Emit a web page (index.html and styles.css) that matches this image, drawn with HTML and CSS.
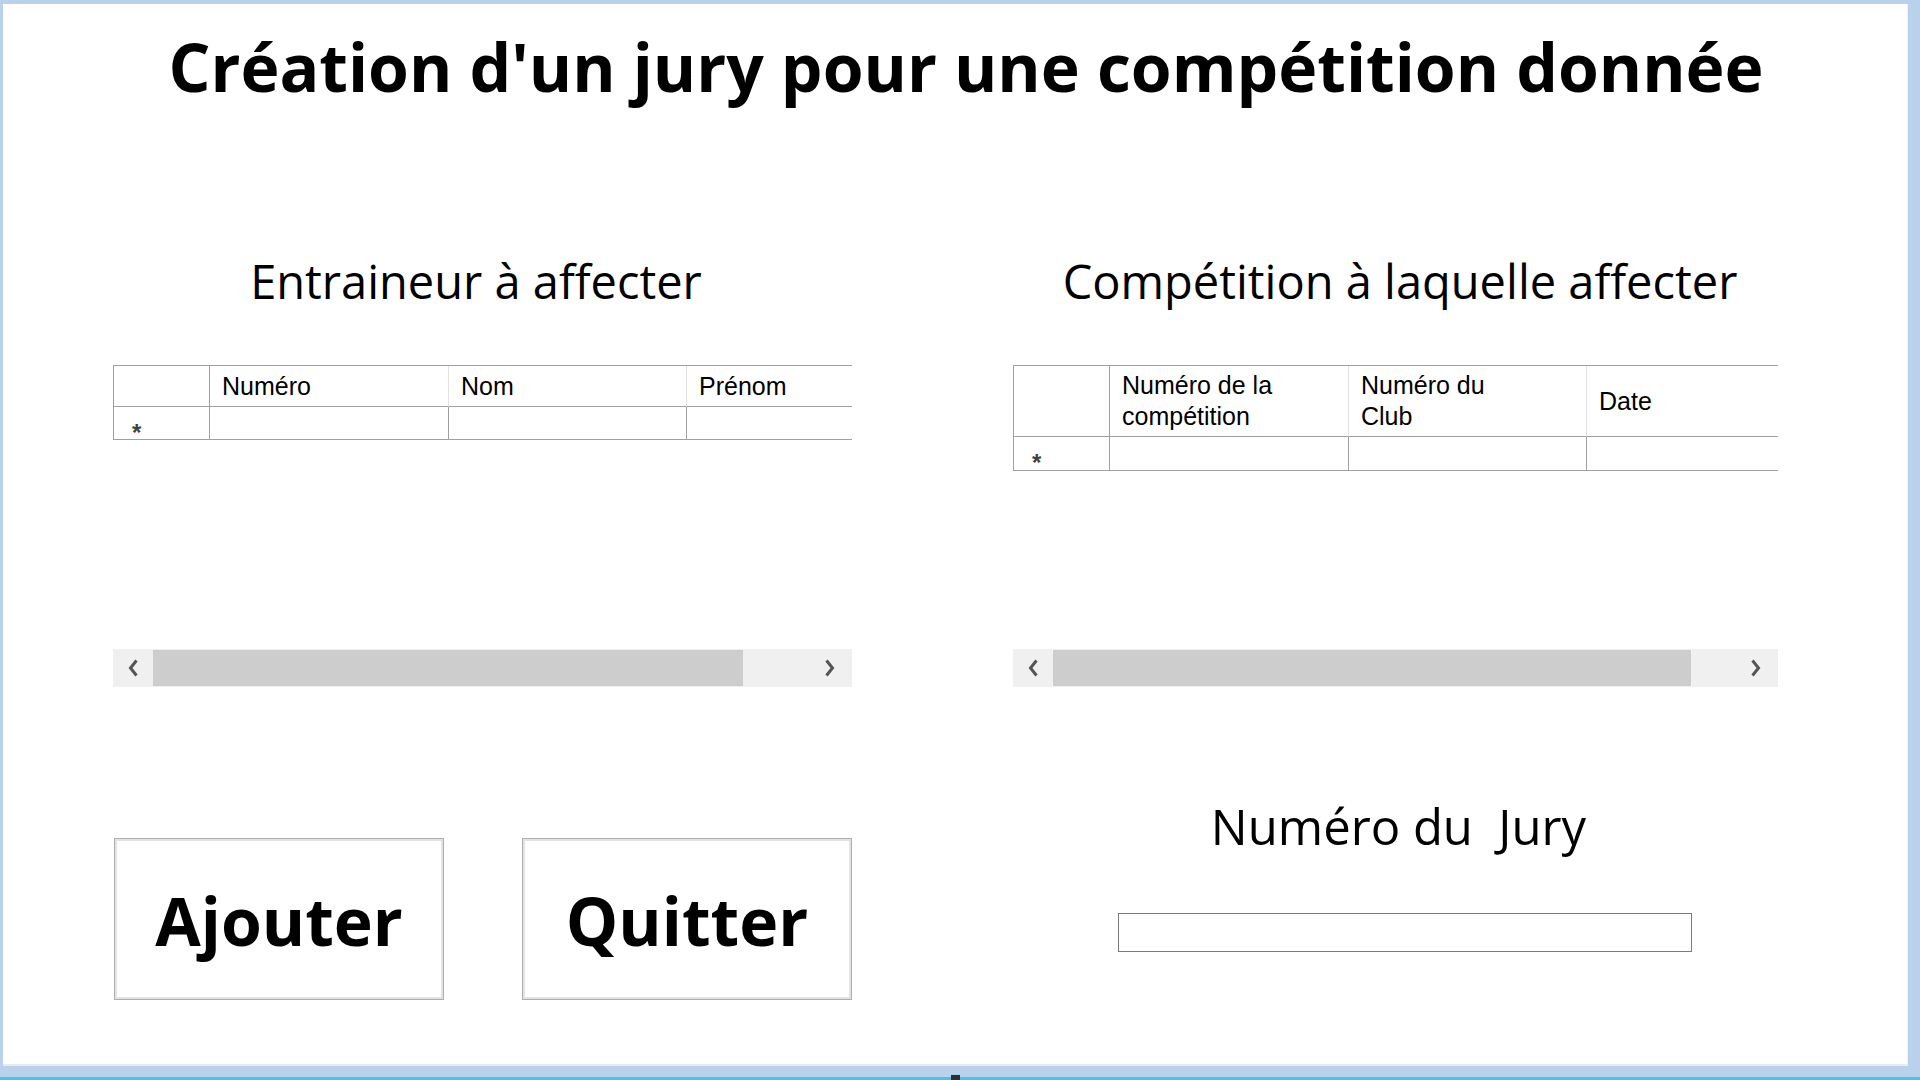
FILE: index.html
```html
<!DOCTYPE html>
<html lang="fr">
<head>
<meta charset="utf-8">
<title>Création d'un jury</title>
<link rel="stylesheet" href="styles.css">
</head>
<body>
<div class="window">
  <h1 class="title">Création d'un jury pour une compétition donnée</h1>
  <div class="columns">
    <section class="col col-left">
      <h2 class="heading heading-left">Entraineur à affecter</h2>
      <div class="dgv">
        <div class="dgv-table">
          <div class="dgv-row dgv-head dgv-head-1">
            <div class="cell rowhead"></div>
            <div class="cell hcell w239">Numéro</div>
            <div class="cell hcell w238">Nom</div>
            <div class="cell hcell w239">Prénom</div>
          </div>
          <div class="dgv-row dgv-data">
            <div class="cell rowhead star">*</div>
            <div class="cell w239"></div>
            <div class="cell w238"></div>
            <div class="cell w239"></div>
          </div>
        </div>
        <div class="hscroll">
          <div class="arrow arrow-l"><svg width="10" height="18" viewBox="0 0 10 18"><path d="M8.5 1.5 L2.5 9 L8.5 16.5" fill="none" stroke="#555" stroke-width="3"/></svg></div>
          <div class="thumb thumb-left"></div>
          <div class="track-rest"></div>
          <div class="arrow arrow-r"><svg width="10" height="18" viewBox="0 0 10 18"><path d="M1.5 1.5 L7.5 9 L1.5 16.5" fill="none" stroke="#555" stroke-width="3"/></svg></div>
        </div>
      </div>
      <div class="buttons">
        <button class="btn">Ajouter</button>
        <button class="btn">Quitter</button>
      </div>
    </section>
    <section class="col col-right">
      <h2 class="heading heading-right">Compétition à laquelle affecter</h2>
      <div class="dgv">
        <div class="dgv-table">
          <div class="dgv-row dgv-head dgv-head-2">
            <div class="cell rowhead"></div>
            <div class="cell hcell w239">Numéro de la<br>compétition</div>
            <div class="cell hcell w238">Numéro du<br>Club</div>
            <div class="cell hcell w239">Date</div>
          </div>
          <div class="dgv-row dgv-data dgv-data-2">
            <div class="cell rowhead star">*</div>
            <div class="cell w239"></div>
            <div class="cell w238"></div>
            <div class="cell w239"></div>
          </div>
        </div>
        <div class="hscroll">
          <div class="arrow arrow-l"><svg width="10" height="18" viewBox="0 0 10 18"><path d="M8.5 1.5 L2.5 9 L8.5 16.5" fill="none" stroke="#555" stroke-width="3"/></svg></div>
          <div class="thumb thumb-right"></div>
          <div class="track-rest"></div>
          <div class="arrow arrow-r"><svg width="10" height="18" viewBox="0 0 10 18"><path d="M1.5 1.5 L7.5 9 L1.5 16.5" fill="none" stroke="#555" stroke-width="3"/></svg></div>
        </div>
      </div>
      <div class="jury-label">Numéro du&nbsp; Jury</div>
      <input class="jury-input" type="text">
    </section>
  </div>
</div>
<div class="taskbar"><span class="tb-icon"></span></div>
</body>
</html>
```
FILE: styles.css
```css
html, body {
  margin: 0;
  padding: 0;
}
body {
  width: 1920px;
  height: 1080px;
  overflow: hidden;
  background: #b9d1ea;
  font-family: "Open Sans", "Noto Sans", sans-serif;
  color: #000;
}
.window {
  margin: 4px 0 0 3px;
  width: 1904px;
  height: 1060px;
  background: #fff;
  border-right: 1px solid #eef2f7;
  border-bottom: 2px solid #e6ebf2;
  box-sizing: content-box;
}
.title {
  margin: 0;
  padding: 29px 0 0 22px;
  font-size: 66px;
  line-height: 66px;
  font-weight: 700;
  text-align: center;
  white-space: nowrap;
}
.columns {
  display: grid;
  grid-template-columns: 739px 765px;
  column-gap: 161px;
  padding-left: 110px;
}
.col {
  display: flex;
  flex-direction: column;
}
.heading {
  margin: 159px 0 0 0;
  font-size: 47px;
  line-height: 47px;
  font-weight: 400;
  text-align: center;
  white-space: nowrap;
}
.heading-left { padding-right: 13px; }
.heading-right { padding-left: 9px; }

.dgv {
  margin-top: 60px;
  height: 322px;
  display: flex;
  flex-direction: column;
  overflow: hidden;
}
.dgv-table {
  border-top: 1px solid #a0a0a0;
  flex: none;
}
.dgv-row {
  display: flex;
  width: max-content;
}
.cell {
  flex: none;
  box-sizing: border-box;
  border-right: 1px solid #a0a0a0;
  border-bottom: 1px solid #a0a0a0;
  font-family: "Liberation Sans", Arial, sans-serif;
  font-size: 25px;
  line-height: 31px;
  color: #000;
}
.rowhead {
  width: 97px;
  border-left: 1px solid #a0a0a0;
}
.w239 { width: 239px; }
.w238 { width: 238px; }
.dgv-head-1 .cell { height: 41px; }
.dgv-head-2 .cell { height: 71px; }
.dgv-data .cell { height: 33px; }
.dgv-data-2 .cell { height: 34px; }
.hcell {
  border-right-color: #e2e2e2;
  padding-left: 12px;
  display: flex;
  align-items: center;
}
.star {
  font-weight: 700;
  font-size: 24px;
  line-height: 24px;
  color: #404040;
  padding: 14px 0 0 18px;
  overflow: visible;
}

.hscroll {
  margin-top: auto;
  height: 38px;
  background: #f0f0f0;
  display: flex;
  align-items: stretch;
  flex: none;
}
.arrow {
  flex: none;
  display: flex;
  align-items: center;
  justify-content: center;
}
.arrow-l { width: 40px; }
.arrow-r { width: 44px; }
.thumb {
  flex: none;
  margin: 1px 0;
  background: #cdcdcd;
}
.thumb-left { width: 590px; }
.thumb-right { width: 638px; }
.track-rest { flex: 1; }

.buttons {
  display: flex;
  gap: 78px;
  margin-top: 151px;
  padding-left: 1px;
}
.btn {
  width: 330px;
  height: 162px;
  box-sizing: border-box;
  background: #fff;
  border: 1px solid #adadad;
  box-shadow: inset 0 0 0 2px #e3e3e3;
  font-family: "Open Sans", "Noto Sans", sans-serif;
  font-weight: 700;
  font-size: 66px;
  line-height: 66px;
  color: #000;
  padding: 2px 0 0 0;
  margin: 0;
}

.jury-label {
  margin-top: 116px;
  font-size: 49px;
  line-height: 47px;
  text-align: center;
  padding-left: 6px;
  white-space: nowrap;
}
.jury-input {
  margin: 63px 0 0 105px;
  width: 574px;
  height: 39px;
  box-sizing: border-box;
  border: 1px solid #7a7a7a;
  background: #fff;
  padding: 0;
  outline: none;
}

.taskbar {
  margin-top: 11px;
  height: 3px;
  background: #4cc3e6;
  display: flex;
  justify-content: center;
}
.tb-icon {
  width: 9px;
  height: 6px;
  margin-top: -3px;
  margin-left: -10px;
  background: #2e2e2e;
  border-top: 1px solid #9ec9e6;
}
```
